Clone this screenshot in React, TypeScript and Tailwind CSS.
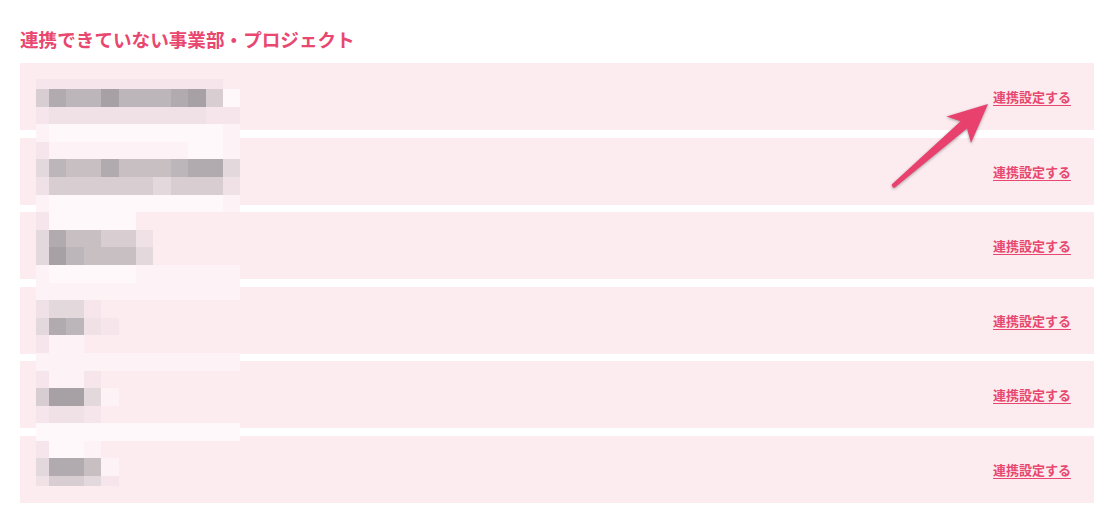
import React from 'react';

// Pixelated (blurred-out) project names, one char per mosaic cell
const MOSAIC = [
  '111111111110',
  '47668666784W',
  '122222222211',
  'wWWWWWWWWWWw',
  '1wwwwwwwwWWw',
  '365575556773',
  '244444434442',
  'wWWWWWWWWWWw',
  '1WWWWW000000',
  '375544200000',
  '386555300000',
  'wWWWWWwwwwww',
  'wwwwwwwwwwww',
  '233100000000',
  '376210000000',
  '1ww000000000',
  'wwwwwwwwwwww',
  '1ww100000000',
  '4883w0000000',
  '122100000000',
  'WWWWWWWWWWWW',
  '1WWw00000000',
  '3775w0000000',
  '244310000000',
];

const SHADES: Record<string, string> = {
  '0': 'bg-[#fcecf0]',
  w: 'bg-[#fdf3f6]',
  W: 'bg-[#fef8fa]',
  '1': 'bg-[#f6e6eb]',
  '2': 'bg-[#efe1e5]',
  '3': 'bg-[#e3d8dc]',
  '4': 'bg-[#d8ced2]',
  '5': 'bg-[#c8bfc3]',
  '6': 'bg-[#bcb5b9]',
  '7': 'bg-[#b1aaae]',
  '8': 'bg-[#a7a0a4]',
};

const ROW_COUNT = 6;

const Mosaic: React.FC = () => (
  <div className="pointer-events-none absolute left-[36px] top-[78.5px] grid grid-cols-[13px_repeat(11,17.4px)] grid-rows-[10.5px_repeat(22,17.6px)_10px]">
    {MOSAIC.map((row, r) =>
      row.split('').map((ch, c) => <div key={`${r}-${c}`} className={SHADES[ch]} />)
    )}
  </div>
);

// Annotation arrow pointing at the first link
const Arrow: React.FC = () => (
  <svg
    className="pointer-events-none absolute left-0 top-0 drop-shadow-[0_1px_1.5px_rgba(0,0,0,0.35)]"
    width="1104"
    height="516"
    viewBox="0 0 1104 516"
  >
    <path
      d="M988 104 L946.5 116.5 L960.6 121.2 L891.7 184.5 Q892.5 188.5 894.6 187.7 L967 128.6 L971 143 Z"
      fill="#e8416d"
      strokeLinejoin="round"
    />
  </svg>
);

const App: React.FC = () => {
  return (
    <div
      className="relative min-h-[516px] w-[1104px] bg-white pl-[20px] pt-[28px]"
      style={{ fontFamily: '"Noto Sans CJK JP", "Noto Sans", sans-serif' }}
    >
      <h2 className="mb-[13px] text-[18.6px] font-bold leading-[22px] text-[#e8476f]">
        連携できていない事業部・プロジェクト
      </h2>

      <div className="flex w-[1074px] flex-col gap-[7.6px]">
        {Array.from({ length: ROW_COUNT }).map((_, i) => (
          <div key={i} className="flex h-[67px] items-center justify-end bg-[#fcecf0] pr-[23px]">
            <a
              href="#"
              className="text-[13px] font-semibold leading-none text-[#e8476f] underline underline-offset-[3px]"
            >
              連携設定する
            </a>
          </div>
        ))}
      </div>

      <Mosaic />
      <Arrow />
    </div>
  );
};

export default App;
